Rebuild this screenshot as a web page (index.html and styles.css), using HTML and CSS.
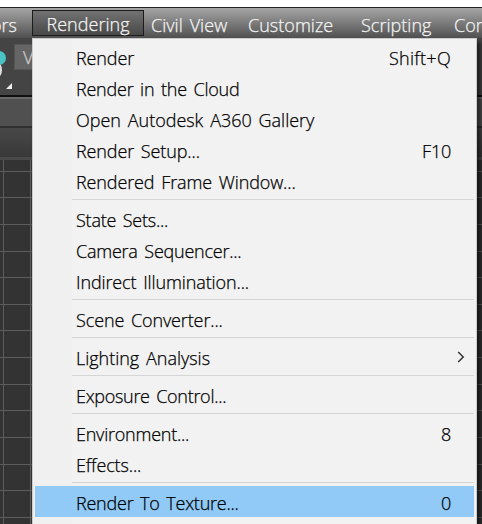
FILE: index.html
```html
<!DOCTYPE html>
<html lang="en">
<head>
<meta charset="utf-8">
<title>Rendering menu</title>
<link rel="stylesheet" href="styles.css">
</head>
<body>
<div class="app">
  <nav class="menubar">
    <span class="tab editors">ors</span>
    <span class="tab active">Rendering</span>
    <span class="tab civil">Civil View</span>
    <span class="tab customize">Customize</span>
    <span class="tab scripting">Scripting</span>
    <span class="tab content">Con</span>
  </nav>
  <div class="toolbar">
    <svg class="tool" width="14" height="57" viewBox="0 0 14 57"><ellipse cx="-2" cy="32" rx="4" ry="7" fill="#ddd"/><circle cx="-1" cy="20" r="7" fill="#48c4c6"/><path d="M12 45v6H6z" fill="#eee"/></svg>
    <span class="view">V</span>
  </div>
  <div class="ribbon"></div>
  <div class="panel"></div>
  <div class="viewport">
    <svg width="482" height="364" viewBox="0 0 482 364"><path d="M3.5 0V364M30.5 0V364M0 11.5H482M0 37.5H482M0 64.5H482M0 91.5H482M0 117.5H482M0 144.5H482M0 170.5H482M0 197.5H482M0 224.5H482M0 250.5H482M0 277.5H482M0 304.5H482M0 330.5H482M0 357.5H482" stroke="#5d5d5d" fill="none"/></svg>
  </div>
  <div class="menu">
    <div class="item"><span class="mid">Render</span><span class="wider">Shift+Q</span></div>
    <div class="item"><span>Render in the Cloud</span></div>
    <div class="item"><span class="wide">Open Autodesk A360 Gallery</span></div>
    <div class="item"><span class="mid">Render Setup...</span><span>F10</span></div>
    <div class="item"><span class="mid">Rendered Frame Window...</span></div>
    <div class="sep"></div>
    <div class="item"><span>State Sets...</span></div>
    <div class="item"><span>Camera Sequencer...</span></div>
    <div class="item"><span class="mid">Indirect Illumination...</span></div>
    <div class="sep"></div>
    <div class="item"><span class="mid">Scene Converter...</span></div>
    <div class="sep"></div>
    <div class="item sub"><span class="wide">Lighting Analysis</span><svg width="8" height="12" viewBox="0 0 8 12"><path d="M1.2 1 6.2 6 1.2 11" fill="none" stroke="#333" stroke-width="1.5"/></svg></div>
    <div class="sep"></div>
    <div class="item"><span class="narrow">Exposure Control...</span></div>
    <div class="sep"></div>
    <div class="item"><span>Environment...</span><span>8</span></div>
    <div class="item"><span class="mid">Effects...</span></div>
    <div class="sep"></div>
    <div class="item selected"><span>Render To Texture...</span><span>0</span></div>
  </div>
</div>
</body>
</html>
```
FILE: styles.css
```css
* { box-sizing: border-box; }
body { margin: 0; background: #fff; }
.app {
  position: relative;
  width: 482px;
  height: 524px;
  padding-top: 7px;
  overflow: hidden;
  font-family: "Open Sans", "Noto Sans", sans-serif;
  font-size: 18px;
  font-weight: 300;
  letter-spacing: -0.23px;
  word-spacing: 2.2px;
  -webkit-text-stroke: 0.25px currentColor;
  color: #000;
}
.menubar {
  display: flex;
  height: 31px;
  padding-top: 3px;
  border-top: 1px solid #222;
  background: linear-gradient(#a6a6a6, #505050);
  color: #f4f4f4;
  white-space: nowrap;
  letter-spacing: 0.03px;
}
.tab { flex: none; height: 26px; line-height: 28px; }
.editors { width: 32px; margin-left: -9px; }
.active { width: 112px; margin-left: 9px; border: 1px solid #1c1c1c; background: linear-gradient(#727272, #484848); text-align: center; line-height: 27px; margin-top: -1px; height: 26px; }
.civil { width: 97px; padding-left: 7px; }
.customize { width: 113px; padding-left: 7px; }
.scripting { width: 93px; padding-left: 7px; }
.content { padding-left: 7px; }
.toolbar { display: flex; height: 57px; background: #444; }
.tool { flex: none; }
.view { width: 60px; height: 26px; margin-top: 6px; padding-left: 8px; border: 1px solid #555; background: #656565; color: #ccc; line-height: 25px; }
.ribbon { height: 33px; border-top: 2px solid #111; border-bottom: 2px solid #303030; background: #505050; box-shadow: inset 0 2px #696969; }
.panel { height: 32px; border-bottom: 3px solid #494949; background: linear-gradient(#484848, #383838); }
.viewport { height: 364px; background: #333; }
.viewport svg { display: block; }
.menu {
  position: absolute;
  left: 32px;
  top: 38px;
  width: 445px;
  height: 500px;
  padding: 2px;
  border: 1px solid #ccc;
  background: linear-gradient(90deg, #f0f0f0 39px, #f2f2f2 39px);
  box-shadow: 4px 4px 4px #0008;
}
.item { display: flex; justify-content: space-between; height: 31px; padding: 0 23px 0 41px; line-height: 35px; white-space: nowrap; }
.mid { letter-spacing: -0.12px; }
.wide { letter-spacing: -0.02px; }
.wider { letter-spacing: 0.3px; }
.narrow { letter-spacing: -0.3px; }
.sub { padding-right: 9px; }
.sub svg { margin-top: 10px; }
.sep { height: 7px; margin-left: 37px; border-top: 3px solid transparent; }
.sep::before { content: ""; display: block; height: 1px; background: #d5d5d5; }
.selected { background: #91c9f7; }
```
